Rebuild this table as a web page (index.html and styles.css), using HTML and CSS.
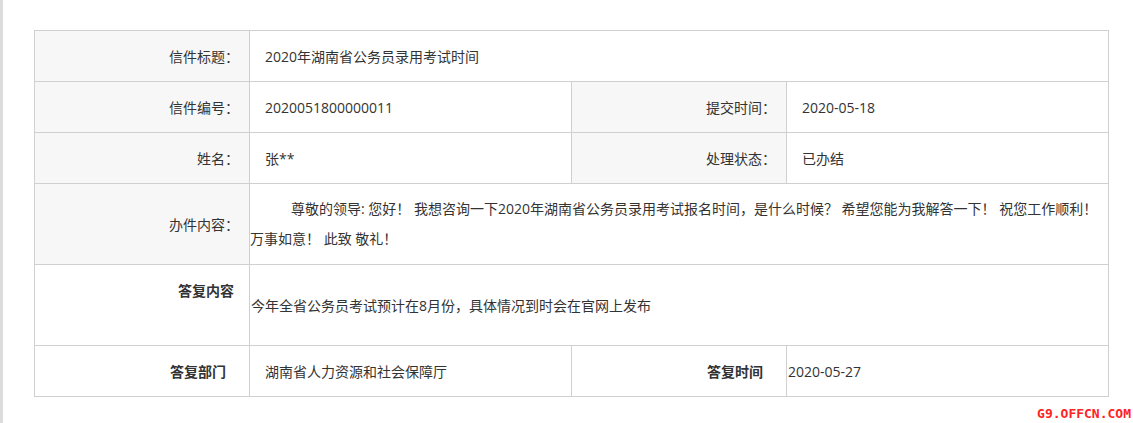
FILE: index.html
```html
<!DOCTYPE html>
<html lang="zh-CN">
<head>
    <meta charset="UTF-8">
    <meta name="viewport" content="width=device-width, initial-scale=1">
    <title>信件详情</title>
    <link rel="stylesheet" href="styles.css">
</head>
<body>
    <div class="page">
        <table class="letter">
            <colgroup>
                <col class="col-label">
                <col class="col-value">
                <col class="col-label">
                <col class="col-value">
            </colgroup>
            <tr>
                <td class="label">信件标题：</td>
                <td class="value" colspan="3">2020年湖南省公务员录用考试时间</td>
            </tr>
            <tr>
                <td class="label">信件编号：</td>
                <td class="value">2020051800000011</td>
                <td class="label">提交时间：</td>
                <td class="value">2020-05-18</td>
            </tr>
            <tr>
                <td class="label">姓名：</td>
                <td class="value">张**</td>
                <td class="label">处理状态：</td>
                <td class="value">已办结</td>
            </tr>
            <tr class="tall">
                <td class="label">办件内容：</td>
                <td class="content" colspan="3">尊敬的领导: 您好！ 我想咨询一下2020年湖南省公务员录用考试报名时间，是什么时候？ 希望您能为我解答一下！ 祝您工作顺利！ 万事如意！ 此致 敬礼！</td>
            </tr>
            <tr class="tall">
                <td class="reply-label top">答复内容</td>
                <td class="reply" colspan="3">今年全省公务员考试预计在8月份，具体情况到时会在官网上发布</td>
            </tr>
            <tr>
                <td class="reply-label">答复部门</td>
                <td class="value">湖南省人力资源和社会保障厅</td>
                <td class="reply-label">答复时间</td>
                <td class="reply">2020-05-27</td>
            </tr>
        </table>
    </div>
    <div class="mark">G9.OFFCN.COM</div>
</body>
</html>
```

FILE: styles.css
```css
html, body {
    height: 100%;
}
body {
    margin: 0;
    font-family: 'Open Sans', 'Noto Sans CJK SC', sans-serif;
    font-size: 14px;
    color: #333;
    background: #fff;
}
.page {
    min-height: 100%;
    box-sizing: border-box;
    border-left: 3px solid #dcdcdc;
    padding: 30px 0 0 31px;
}
.letter {
    width: 1075px;
    border-collapse: collapse;
    table-layout: fixed;
}
.col-label {
    width: 215px;
}
.col-value {
    width: 322px;
}
.letter td {
    height: 50px;
    padding: 0;
    border: 1px solid #d0d0d0;
    vertical-align: middle;
}
.letter .tall td {
    height: 80px;
}
.label {
    background-color: #f7f7f7;
    text-align: right;
    padding-right: 10px !important;
}
.value {
    padding-left: 15px !important;
}
.content {
    line-height: 30px;
    text-indent: 41px;
}
.reply-label {
    font-weight: bold;
    text-align: right;
    padding-right: 23px !important;
}
.letter .tall .top {
    vertical-align: top;
    height: 64px;
    padding-top: 16px;
    padding-right: 15px !important;
    line-height: 20px;
}
.reply {
    padding-left: 1px !important;
}
.mark {
    position: absolute;
    right: 2px;
    bottom: 3px;
    font-family: 'DejaVu Sans Mono', monospace;
    font-weight: bold;
    font-size: 13px;
    line-height: 13px;
    color: #f22;
}
```
